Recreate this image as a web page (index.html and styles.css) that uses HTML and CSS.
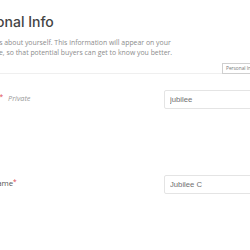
FILE: index.html
```html
<!DOCTYPE html>
<html lang="en">

<head>
    <meta charset="UTF-8">
    <meta name="viewport" content="width=device-width, initial-scale=1.0">
    <title>Personal Info</title>
    <link rel="stylesheet" href="styles.css">
</head>

<body>
    <div class="page">
        <header class="section-head">
            <h1>Personal Info</h1>
            <p>Tell us about yourself. This information will appear on your profile, so that potential buyers can get to know you better.</p>
        </header>
        <div class="divider">
            <div class="rule"></div>
            <span class="tag">Personal Info</span>
        </div>
        <div class="field">
            <label class="field-label">Full name<span class="req">*</span> <em class="note">Private</em></label>
            <input class="field-input" type="text" value="jubilee">
        </div>
        <div class="field">
            <label class="field-label">Display name<span class="req">*</span></label>
            <input class="field-input" type="text" value="Jubilee C">
        </div>
    </div>
</body>

</html>
```

FILE: styles.css
```css
body {
    margin: 0;
    background: #fff;
    font-family: "Open Sans", "Liberation Sans", sans-serif;
    overflow: hidden;
}

.page {
    margin-left: -36px;
    width: 340px;
    padding-top: 13px;
}

.section-head {
    padding-left: 18px;
}

.section-head h1 {
    margin: 0 0 0 -16px;
    font-family: "Inter", "Liberation Sans", sans-serif;
    font-size: 14px;
    font-weight: 500;
    line-height: 18px;
    color: #444;
}

.section-head p {
    margin: 7px 0 0;
    width: 200px;
    font-size: 6.9px;
    line-height: 10px;
    color: #8c8c8c;
}

.divider {
    display: flex;
    align-items: flex-end;
    margin-top: 5px;
}

.rule {
    flex: 1;
    border-bottom: 1px solid #efefef;
}

.tag {
    width: 44px;
    margin-right: 30px;
    padding: 1px 3px;
    border: 1px solid #cfcfcf;
    font-size: 4.8px;
    line-height: 7px;
    color: #777;
    white-space: nowrap;
    overflow: hidden;
}

.field {
    display: grid;
    grid-template-columns: 200px 1fr;
    align-items: start;
    height: 85px;
}

.divider + .field {
    margin-top: 16px;
}

.field-label {
    padding-top: 1.5px;
    font-size: 7.8px;
    line-height: 12px;
    color: #555;
}

.req {
    color: #e0464f;
    font-size: 6.5px;
    vertical-align: top;
    line-height: 9px;
}

.note {
    margin-left: 3px;
    color: #9a9a9a;
    font-size: 7.3px;
}

.field-input {
    box-sizing: border-box;
    width: 130px;
    height: 19px;
    margin: 0;
    padding: 0 5px;
    border: 1px solid #e4e4e4;
    border-radius: 2px;
    font-family: "Liberation Sans", sans-serif;
    font-size: 7.7px;
    color: #6f6f6f;
    outline: none;
}
```
